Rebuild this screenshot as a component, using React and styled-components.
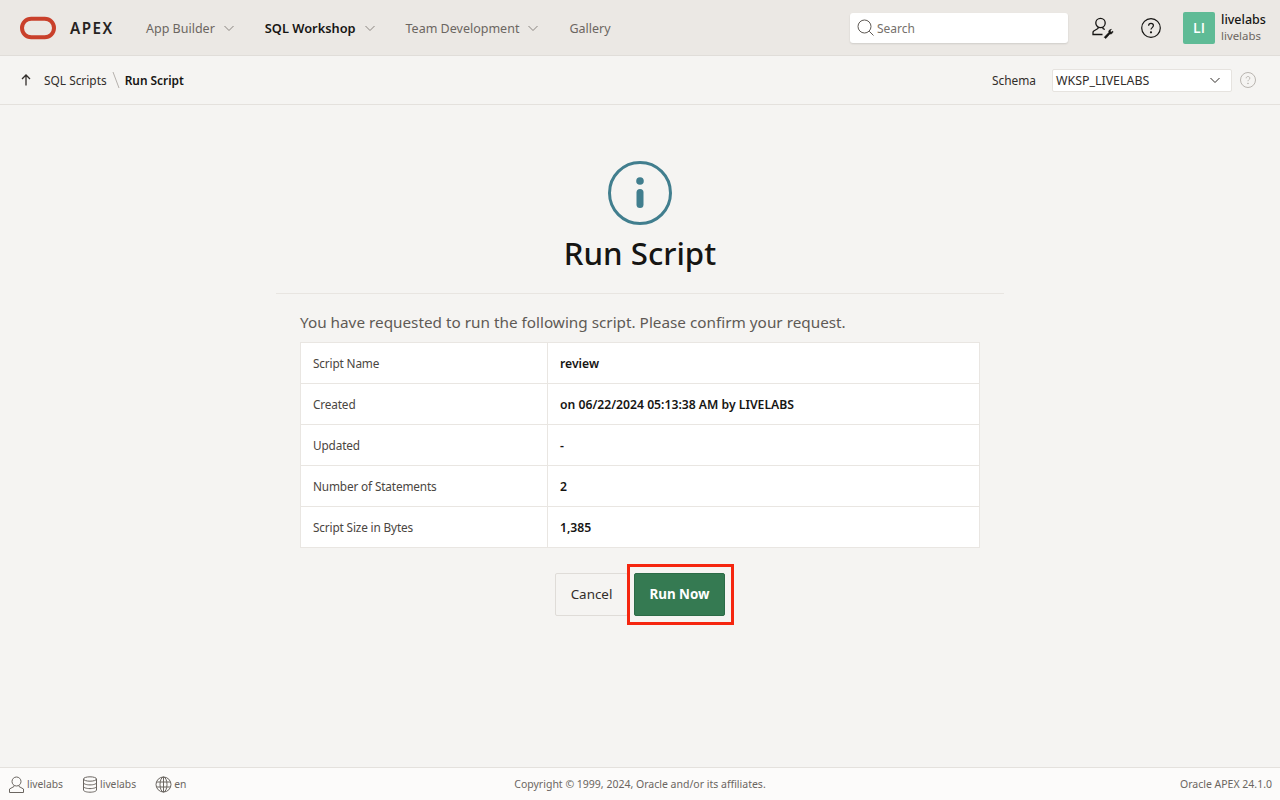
import React from 'react';
import styled, { createGlobalStyle } from 'styled-components';

const GlobalStyle = createGlobalStyle`
  html, body { margin: 0; padding: 0; }
  body {
    font-family: "Noto Sans", "Open Sans", sans-serif;
    background: #f5f4f2;
    color: #161513;
  }
`;

const Page = styled.div`
  width: 1280px;
  height: 800px;
  display: flex;
  flex-direction: column;
  overflow: hidden;
`;

const Header = styled.header`
  height: 56px;
  flex: none;
  display: flex;
  align-items: center;
  box-sizing: border-box;
  background: #ebe8e4;
  border-bottom: 1px solid #e0ddd9;
  padding: 0 14px 0 20px;
`;

const Brand = styled.div`
  display: flex;
  align-items: center;
  gap: 14px;
  width: 126px;
`;

const BrandName = styled.span`
  font-size: 15.2px;
  font-weight: 600;
  letter-spacing: 1.5px;
  color: #26231f;
`;

const Nav = styled.nav`
  display: flex;
  align-items: center;
  gap: 30px;
  flex: 1;
  padding-top: 1px;
`;

const NavItem = styled.div`
  display: flex;
  align-items: center;
  gap: 8px;
  font-size: ${p => (p.$active ? '12.8px' : '12.5px')};
  font-weight: ${p => (p.$active ? 600 : 400)};
  color: ${p => (p.$active ? '#161513' : '#6b6661')};
  svg { color: #8a8580; }
`;

const SearchBox = styled.div`
  width: 218px;
  height: 30px;
  display: flex;
  align-items: center;
  gap: 3px;
  padding-left: 7px;
  box-sizing: border-box;
  background: #fff;
  border-radius: 3px;
  box-shadow: 0 1px 2px rgba(0, 0, 0, 0.12);
  font-size: 12px;
  line-height: 17px;
  color: #75706b;
`;

const SearchLabel = styled.span`
  padding-top: 1px;
`;

const HeaderIcons = styled.div`
  display: flex;
  align-items: center;
  gap: 27px;
  margin-left: 24px;
  color: #161513;
`;

const UserBlock = styled.div`
  display: flex;
  align-items: center;
  gap: 6px;
  margin-left: 22px;
`;

const Avatar = styled.div`
  width: 32px;
  height: 32px;
  display: flex;
  align-items: center;
  justify-content: center;
  background: #5fbb96;
  border-radius: 2px;
  color: #fff;
  font-family: "Open Sans", sans-serif;
  font-size: 14px;
  font-weight: 600;
`;

const UserText = styled.div`
  display: flex;
  flex-direction: column;
  width: 45px;
  line-height: 16px;
`;

const UserName = styled.span`
  font-size: 12.5px;
  font-weight: 500;
  color: #161513;
`;

const UserSub = styled.span`
  font-size: 11.4px;
  color: #6b6661;
`;

const SubBar = styled.div`
  height: 49px;
  flex: none;
  display: flex;
  align-items: center;
  box-sizing: border-box;
  border-bottom: 1px solid #e4e1dd;
  padding: 0 24px 0 20px;
`;

const Crumbs = styled.div`
  display: flex;
  align-items: center;
  flex: 1;
  font-size: 11.9px;
  color: #312d2a;
`;

const CrumbLink = styled.span`
  margin-left: 12px;
`;

const CrumbSep = styled.svg`
  margin: 0 5px;
  color: #b5b1ad;
`;

const CrumbCurrent = styled.span`
  font-weight: 600;
  color: #161513;
`;

const SchemaLabel = styled.span`
  font-size: 11.9px;
  color: #312d2a;
  margin-right: 16px;
`;

const SchemaSelect = styled.div`
  width: 180px;
  height: 23px;
  display: flex;
  align-items: center;
  justify-content: space-between;
  box-sizing: border-box;
  padding: 0 10px 0 3px;
  background: #fff;
  border: 1px solid #e6e3df;
  border-radius: 2px;
  font-size: 12.4px;
  color: #312d2a;
`;

const HelpSmall = styled.svg`
  margin-left: 8px;
  color: #b9b5b0;
`;

const Main = styled.main`
  flex: 1;
  display: flex;
  flex-direction: column;
  align-items: center;
`;

const Hero = styled.div`
  width: 728px;
  height: 189px;
  flex: none;
  display: flex;
  flex-direction: column;
  align-items: center;
  padding-top: 56px;
  box-sizing: border-box;
  border-bottom: 1px solid #e8e5e1;
`;

const HeroTitle = styled.h1`
  margin: 6px 0 0;
  font-size: 31.2px;
  line-height: 44px;
  font-weight: 500;
  color: #161513;
`;

const Intro = styled.p`
  width: 680px;
  margin: 18px 0 9px;
  font-size: 15.3px;
  line-height: 21px;
  color: #5f5a55;
`;

const InfoTable = styled.div`
  width: 680px;
  background: #fff;
  border: 1px solid #e9e6e2;
  box-sizing: border-box;
`;

const InfoRow = styled.div`
  height: 41px;
  display: grid;
  grid-template-columns: 247px 1fr;
  box-sizing: border-box;
  border-bottom: 1px solid #e9e6e2;
  &:last-child { border-bottom: 0; height: 40px; }
`;

const InfoLabel = styled.div`
  display: flex;
  align-items: center;
  padding: 0 0 1px 12px;
  border-right: 1px solid #e9e6e2;
  font-size: 11.8px;
  letter-spacing: -0.15px;
  color: #4a4641;
`;

const InfoValue = styled.div`
  display: flex;
  align-items: center;
  padding-left: 12px;
  font-size: 12.2px;
  font-weight: 600;
  color: #161513;
`;

const Actions = styled.div`
  display: flex;
  gap: 6px;
  margin-top: 25px;
`;

const CancelButton = styled.button`
  width: 73px;
  height: 43px;
  padding: 0 0 2px;
  background: #f5f4f2;
  border: 1px solid #dfdcd8;
  border-radius: 2px;
  font: 400 13.4px "Noto Sans", sans-serif;
  color: #312d2a;
`;

const RunWrap = styled.div`
  position: relative;
  /* red annotation box around the primary button */
  &::after {
    content: '';
    position: absolute;
    inset: -9px -9px -9px -7px;
    border: 3px solid #f5260f;
    pointer-events: none;
  }
`;

const RunButton = styled.button`
  display: block;
  width: 91px;
  height: 43px;
  padding: 0 0 2px;
  background: #357a52;
  border: 1px solid #2c6b47;
  border-radius: 2px;
  font: 700 13.4px "Noto Sans", sans-serif;
  color: #fff;
`;

const Footer = styled.footer`
  height: 33px;
  flex: none;
  display: grid;
  grid-template-columns: 1fr auto 1fr;
  align-items: center;
  box-sizing: border-box;
  padding: 0 8px;
  background: #fcfbfa;
  border-top: 1px solid #e4e1dd;
  font-size: 10.5px;
  color: #6b6661;
`;

const FooterLeft = styled.div`
  display: flex;
  align-items: center;
  gap: 19px;
`;

const FooterItem = styled.span`
  display: flex;
  align-items: center;
  gap: 2px;
  font-size: 10.3px;
`;

const FooterVersion = styled.div`
  text-align: right;
`;

const Chevron = ({ size = 12 }) => (
  <svg width={size} height={size} viewBox="0 0 12 12" fill="none" stroke="currentColor" strokeWidth="1">
    <path d="M1.5 4 6 8.5 10.5 4" />
  </svg>
);

const OracleLogo = () => (
  <svg width="36" height="24" viewBox="0 0 36 24" fill="none">
    <rect x="2" y="2.7" width="32" height="18.600" rx="9.300" stroke="#c9402b" strokeWidth="4" />
  </svg>
);

const App = () => {
  const rows = [
    ['Script Name', 'review'],
    ['Created', 'on 06/22/2024 05:13:38 AM by LIVELABS'],
    ['Updated', '-'],
    ['Number of Statements', '2'],
    ['Script Size in Bytes', '1,385'],
  ];

  return (
    <Page>
      <GlobalStyle />
      <Header>
        <Brand>
          <OracleLogo />
          <BrandName>APEX</BrandName>
        </Brand>
        <Nav>
          <NavItem>App Builder <Chevron /></NavItem>
          <NavItem $active>SQL Workshop <Chevron /></NavItem>
          <NavItem>Team Development <Chevron /></NavItem>
          <NavItem>Gallery</NavItem>
        </Nav>
        <SearchBox>
          <svg width="17" height="17" viewBox="0 0 17 17" fill="none" stroke="#5f5a55" strokeWidth="1">
            <circle cx="7.500" cy="7.500" r="6.500" />
            <path d="M12.200 12.200 16.500 16.500" />
          </svg>
          <SearchLabel>Search</SearchLabel>
        </SearchBox>
        <HeaderIcons>
          <svg width="22" height="22" viewBox="0 0 22 22" fill="none" stroke="currentColor" strokeWidth="1.300">
            <circle cx="8.500" cy="6" r="4.700" />
            <path d="M6 10.200v1.300L1.800 14c-.6.400-.8.900-.8 1.500V17.500h9.500" />
            <path d="M11 10.200v1.300l1.800 1" />
            <path d="M12.200 20.300 16.800 15.500c-.5-1.500.5-3 2.600-3.200l-1.300 1.700 1 1.300 1.800-1.200c.2 2-1.500 3.300-3.100 2.900L13.800 21.500z" fill="currentColor" strokeWidth=".6" />
          </svg>
          <svg width="20" height="20" viewBox="0 0 20 20" fill="none" stroke="currentColor" strokeWidth="1.200">
            <circle cx="10" cy="10" r="9.300" />
            <path d="M7.600 7.800c0-1.500 1.100-2.400 2.400-2.400s2.400.9 2.400 2.200c0 2-2.400 2-2.400 4" />
            <circle cx="10" cy="14.300" r=".5" fill="currentColor" />
          </svg>
        </HeaderIcons>
        <UserBlock>
          <Avatar>LI</Avatar>
          <UserText>
            <UserName>livelabs</UserName>
            <UserSub>livelabs</UserSub>
          </UserText>
        </UserBlock>
      </Header>

      <SubBar>
        <Crumbs>
          <svg width="12" height="12" viewBox="0 0 12 12" fill="none" stroke="#312d2a" strokeWidth="1.300">
            <path d="M6 11.500V1M2 5l4-4 4 4" />
          </svg>
          <CrumbLink>SQL Scripts</CrumbLink>
          <CrumbSep width="8" height="18" viewBox="0 0 8 18" fill="none" stroke="currentColor" strokeWidth="1">
            <path d="M1 1l6 16" />
          </CrumbSep>
          <CrumbCurrent>Run Script</CrumbCurrent>
        </Crumbs>
        <SchemaLabel>Schema</SchemaLabel>
        <SchemaSelect>
          WKSP_LIVELABS
          <Chevron />
        </SchemaSelect>
        <HelpSmall width="16" height="16" viewBox="0 0 16 16" fill="none" stroke="currentColor" strokeWidth="1">
          <circle cx="8" cy="8" r="7.500" />
          <path d="M6.200 6.300c0-1.100.8-1.800 1.800-1.800s1.800.7 1.800 1.700c0 1.500-1.800 1.500-1.800 3" />
          <circle cx="8" cy="11.400" r=".4" fill="currentColor" />
        </HelpSmall>
      </SubBar>

      <Main>
        <Hero>
          <svg width="64" height="64" viewBox="0 0 64 64" fill="none">
            <circle cx="32" cy="32" r="30.500" stroke="#417e8e" strokeWidth="3" />
            <circle cx="32" cy="20" r="3.800" fill="#417e8e" />
            <rect x="28.500" y="28" width="7" height="19" rx="3.500" fill="#417e8e" />
          </svg>
          <HeroTitle>Run Script</HeroTitle>
        </Hero>
        <Intro>You have requested to run the following script. Please confirm your request.</Intro>
        <InfoTable>
          {rows.map(([label, value]) => (
            <InfoRow key={label}>
              <InfoLabel>{label}</InfoLabel>
              <InfoValue>{value}</InfoValue>
            </InfoRow>
          ))}
        </InfoTable>
        <Actions>
          <CancelButton>Cancel</CancelButton>
          <RunWrap>
            <RunButton>Run Now</RunButton>
          </RunWrap>
        </Actions>
      </Main>

      <Footer>
        <FooterLeft>
          <FooterItem>
            <svg width="17" height="17" viewBox="0 0 17 17" fill="none" stroke="#6b6661" strokeWidth="1">
              <circle cx="8.500" cy="5.500" r="4.500" />
              <path d="M6 9.500v1L1.500 13v3.500h14V13L11 10.500v-1" />
            </svg>
            livelabs
          </FooterItem>
          <FooterItem>
            <svg width="16" height="17" viewBox="0 0 16 17" fill="none" stroke="#6b6661" strokeWidth="1">
              <ellipse cx="8" cy="3" rx="6.500" ry="2.200" />
              <path d="M1.500 3v11c0 1.300 3 2.200 6.500 2.200s6.500-.9 6.500-2.200V3M1.500 6.700c0 1.300 3 2.200 6.500 2.200s6.500-.9 6.500-2.200M1.500 10.400c0 1.300 3 2.200 6.500 2.200s6.500-.9 6.500-2.200" />
            </svg>
            livelabs
          </FooterItem>
          <FooterItem>
            <svg width="17" height="17" viewBox="0 0 17 17" fill="none" stroke="#6b6661" strokeWidth="1">
              <circle cx="8.500" cy="8.500" r="7.500" />
              <ellipse cx="8.500" cy="8.500" rx="3.500" ry="7.500" />
              <path d="M1.500 6h14M1.500 11h14M8.500 1v15" />
            </svg>
            en
          </FooterItem>
        </FooterLeft>
        <div>Copyright © 1999, 2024, Oracle and/or its affiliates.</div>
        <FooterVersion>Oracle APEX 24.1.0</FooterVersion>
      </Footer>
    </Page>
  );
};

export default App;
